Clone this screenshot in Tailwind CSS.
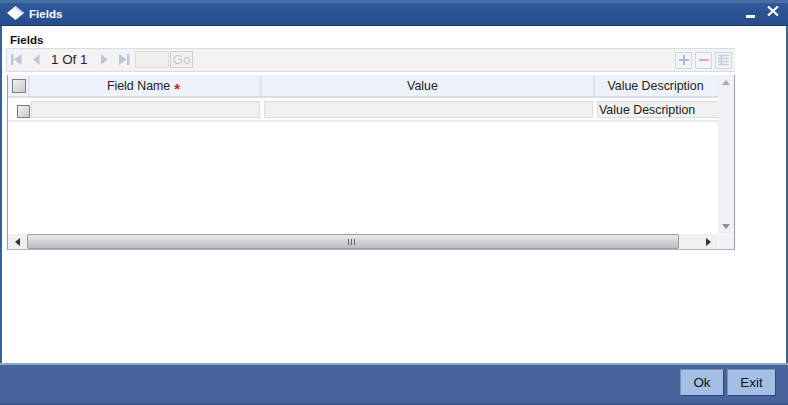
<!DOCTYPE html>
<html>
<head>
<meta charset="utf-8">
<script src="https://cdn.jsdelivr.net/npm/@tailwindcss/browser@4"></script>
</head>
<body class="m-0 overflow-hidden bg-white">
<div class="flex h-[405px] w-[788px] flex-col overflow-hidden font-['Liberation_Sans',Arial,sans-serif] text-[12.4px] text-[#222]">
  <header class="flex h-[26px] items-center justify-between border-t-[3px] border-b-[1px] border-t-[#4a6ea6] border-b-[#1c3a6c] bg-gradient-to-b from-[#30599b] to-[#264d8b] pl-[7px] pr-[9px]">
    <div class="flex items-center gap-[5px]">
      <svg width="17" height="15" viewBox="0 0 17 15"><polygon points="8.5,0 17,7 8.5,14 0,7" fill="#fff"/><polygon points="8.5,0 17,7 14,7 8.5,2.5" fill="#c9d6ea"/></svg>
      <span class="text-[11.6px] font-bold text-white">Fields</span>
    </div>
    <div class="flex items-center gap-[12px]">
      <div class="mt-[5px] h-[3px] w-[9px] bg-white"></div>
      <svg width="12" height="10" viewBox="0 0 12 10" class="-mt-[6px]"><path d="M1 0.5 L11 9.5 M11 0.5 L1 9.5" stroke="#fff" stroke-width="2.2"/></svg>
    </div>
  </header>
  <main class="flex-1 border-x-[2px] border-x-[#3f5f98] bg-white pl-[4px] pt-[6px]">
    <div class="h-[16px] pl-[4px] text-[11.6px] leading-[16px] font-bold text-[#111]">Fields</div>
    <div class="flex h-[24px] w-[729px] items-center justify-between border-y border-l border-[#d8dce2] bg-[#f3f3f3] pl-[3px] pr-[3px]">
      <div class="flex items-center">
        <svg width="13" height="13" viewBox="0 0 13 13" class="mr-[9px]"><rect x="1" y="1" width="2.5" height="11" fill="#b9c6de"/><polygon points="11.5,1 11.5,12 4,6.5" fill="#b9c6de"/></svg>
        <svg width="9" height="13" viewBox="0 0 9 13" class="mr-[10px]"><polygon points="7.5,1 7.5,12 1,6.5" fill="#b9c6de"/></svg>
        <span class="w-[49px] text-[13.4px] text-[#222]">1&nbsp;Of&nbsp;1</span>
        <svg width="9" height="13" viewBox="0 0 9 13" class="mr-[9px]"><polygon points="1,1 1,12 7.5,6.5" fill="#b9c6de"/></svg>
        <svg width="13" height="13" viewBox="0 0 13 13" class="mr-[4px]"><rect x="9" y="1" width="2.5" height="11" fill="#b9c6de"/><polygon points="1,1 1,12 8.5,6.5" fill="#b9c6de"/></svg>
        <div class="h-[17px] w-[34px] border border-[#dcdcdc] bg-[#efefef]"></div>
        <div class="ml-[1px] flex h-[17px] w-[23px] items-center justify-center border border-[#cfcfcf] bg-[#f0f0f0] text-[13px] text-[#c8c8c8]">Go</div>
      </div>
      <div class="flex items-center gap-[3px]">
        <div class="flex h-[17px] w-[17px] items-center justify-center border border-[#d2d8e2] bg-[#f2f4f8]"><svg width="12" height="12" viewBox="0 0 12 12"><path d="M6 1V11M1 6H11" stroke="#a9bad6" stroke-width="2"/></svg></div>
        <div class="flex h-[17px] w-[17px] items-center justify-center border border-[#d2d8e2] bg-[#f2f4f8]"><svg width="12" height="12" viewBox="0 0 12 12"><path d="M1 6H11" stroke="#e2a9a9" stroke-width="2"/></svg></div>
        <div class="flex h-[17px] w-[17px] items-center justify-center border border-[#d2d8e2] bg-[#f2f4f8]"><svg width="13" height="13" viewBox="0 0 13 13"><path d="M1 1.5H12M1 4.5H12M1 7.5H12M1 10.5H12M4.5 1V11" stroke="#c2cede" stroke-width="1.4" fill="none"/></svg></div>
      </div>
    </div>
    <div class="ml-[1px] mt-[3px] flex h-[175px] w-[728px] flex-col border-x border-b border-x-[#86a4c6] border-b-[#9db4cf] bg-white">
      <div class="flex min-h-0 flex-1">
        <div class="min-w-0 flex-1 overflow-hidden">
          <div class="flex h-[23px] border-b-2 border-[#d5deec] bg-[#eef2fb] pt-[1px] text-[#222]">
            <div class="flex w-[22px] shrink-0 items-center justify-start border-r-2 border-[#dde4f0] pl-[4px]"><div class="h-[14px] w-[14px] border border-[#7f7f7f] bg-gradient-to-br from-[#f2f2f2] to-[#c9c9c9]"></div></div>
            <div class="flex w-[232px] shrink-0 items-center justify-center border-r-2 border-[#dde4f0] pr-[3px]">Field Name<span class="ml-[4px] mt-[5px] text-[15px] leading-none font-bold text-[#d02020]">*</span></div>
            <div class="flex w-[333px] shrink-0 items-center justify-center border-r-2 border-[#dde4f0] pr-[10px]">Value</div>
            <div class="flex flex-1 items-center justify-center pr-[2px]">Value Description</div>
          </div>
          <div class="flex h-[24px] items-start border-b-2 border-[#e8ebf0] pt-[3px]">
            <div class="flex h-[17px] w-[22px] shrink-0 items-end justify-end"><div class="h-[13px] w-[13px] border border-[#7f7f7f] bg-gradient-to-br from-[#f2f2f2] to-[#c9c9c9]"></div></div>
            <div class="ml-[1px] h-[17px] w-[229px] shrink-0 border border-[#dcdcdc] bg-[#f0f0f0]"></div>
            <div class="ml-[4px] h-[17px] w-[329px] shrink-0 border border-[#dcdcdc] bg-[#f0f0f0]"></div>
            <div class="ml-[4px] h-[17px] flex-1 border-y border-l border-[#dcdcdc] bg-[#f0f0f0] pl-[1px] leading-[17px] whitespace-nowrap">Value Description</div>
          </div>
        </div>
        <div class="flex w-[16px] shrink-0 flex-col items-center justify-between bg-[#f0f0f0] py-[5px]">
          <svg width="8" height="5" viewBox="0 0 8 5"><polygon points="4,0 8,5 0,5" fill="#a9a9a9"/></svg>
          <svg width="8" height="5" viewBox="0 0 8 5"><polygon points="0,0 8,0 4,5" fill="#8f8f8f"/></svg>
        </div>
      </div>
      <div class="flex h-[15px] bg-[#f0f0f0]">
        <div class="flex w-[19px] shrink-0 items-center justify-center"><svg width="5" height="8" viewBox="0 0 5 8"><polygon points="5,0 5,8 0,4" fill="#333"/></svg></div>
        <div class="flex h-[15px] w-[652px] shrink-0 items-center justify-center rounded-[2px] border border-[#9a9a9a] bg-gradient-to-b from-[#eaeaea] to-[#bcbcc0] pr-[4px]"><svg width="7" height="6" viewBox="0 0 7 6"><path d="M0.5 0V6M3.5 0V6M6.5 0V6" stroke="#666"/></svg></div>
        <div class="flex w-[39px] shrink-0 items-center justify-end pr-[7px]"><svg width="5" height="8" viewBox="0 0 5 8"><polygon points="0,0 0,8 5,4" fill="#333"/></svg></div>
        <div class="w-[16px] shrink-0 border-l border-t border-[#fafafa]"></div>
      </div>
    </div>
  </main>
  <footer class="flex h-[42px] items-start justify-end gap-[3px] border-t-2 border-b-2 border-t-[#8ea7cb] border-b-[#3a5587] bg-[#47659c] pr-[12px] pt-[4px]">
    <button class="h-[27px] w-[44px] border border-[#7593bd] border-b-[#2d4876] border-r-[#2d4876] bg-[#a3c0e4] pt-[1px] text-[13.4px] text-[#111]">Ok</button>
    <button class="h-[27px] w-[49px] border border-[#7593bd] border-b-[#2d4876] border-r-[#2d4876] bg-[#a3c0e4] pt-[1px] text-[13.4px] text-[#111]">Exit</button>
  </footer>
</div>
</body>
</html>
